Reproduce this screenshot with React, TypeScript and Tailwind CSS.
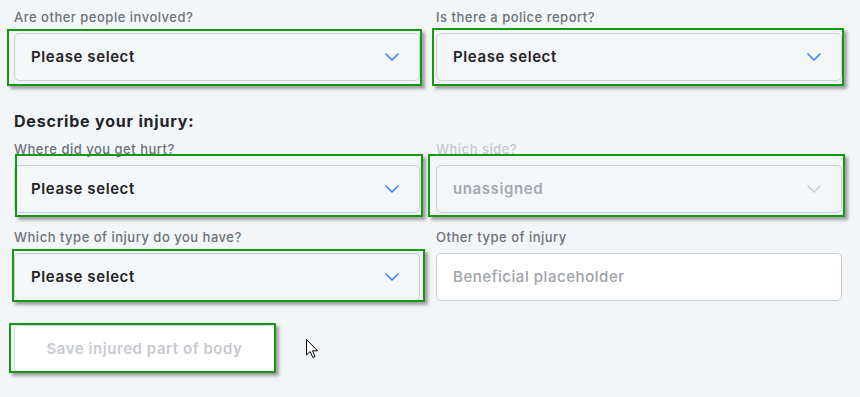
import React from "react";

const font = { fontFamily: "Inter, 'Noto Sans', sans-serif" };

function Chevron({ disabled }: { disabled?: boolean }) {
  return (
    <svg width="14" height="8" viewBox="0 0 14 8" fill="none">
      <path
        d="M1 1l6 6 6-6"
        stroke={disabled ? "#c9ccd1" : "#3b82f6"}
        strokeWidth="1.6"
        strokeLinecap="round"
        strokeLinejoin="round"
      />
    </svg>
  );
}

function Select({ value, disabled }: { value: string; disabled?: boolean }) {
  return (
    <div className="flex h-[48px] items-center justify-between rounded-[5px] border border-[#cbcfd5] bg-[#f4f7fa] pl-4 pr-5">
      <span
        className={
          disabled
            ? "text-[15px] font-semibold tracking-[0.6px] text-[#a4a8af]"
            : "text-[15px] font-semibold tracking-[0.6px] text-[#1f2226]"
        }
      >
        {value}
      </span>
      <Chevron disabled={disabled} />
    </div>
  );
}

function Label({ children, disabled }: { children: React.ReactNode; disabled?: boolean }) {
  return (
    <div
      className={
        disabled
          ? "mb-2 h-4 text-[13px] font-medium leading-4 tracking-[0.5px] text-[#c5c8cd]"
          : "mb-2 h-4 text-[13px] font-medium leading-4 tracking-[0.5px] text-[#6d7178]"
      }
    >
      {children}
    </div>
  );
}

function Frame({ l, t, w, h }: { l: number; t: number; w: number; h: number }) {
  return (
    <div
      className="pointer-events-none absolute border-2 border-[#139a13] shadow-[3px_3px_3px_rgba(0,0,0,0.35)]"
      style={{ left: l, top: t, width: w, height: h }}
    />
  );
}

export default function App() {
  return (
    <div className="relative h-[397px] w-[860px] overflow-hidden bg-[#f3f6f9]" style={font}>
      <div className="pl-[14px] pr-[18px] pt-[9px]">
        <div className="grid grid-cols-2 gap-x-4">
          <div>
            <Label>Are other people involved?</Label>
            <Select value="Please select" />
          </div>
          <div>
            <Label>Is there a police report?</Label>
            <Select value="Please select" />
          </div>
        </div>

        <div className="mt-[28px] h-6 text-[16px] font-bold leading-6 tracking-[0.8px] text-[#222428]">
          Describe your injury:
        </div>

        <div className="mt-[8px] grid grid-cols-2 gap-x-4">
          <div>
            <Label>Where did you get hurt?</Label>
            <Select value="Please select" />
          </div>
          <div>
            <Label disabled>Which side?</Label>
            <Select value="unassigned" disabled />
          </div>
        </div>

        <div className="mt-[16px] grid grid-cols-2 gap-x-4">
          <div>
            <Label>Which type of injury do you have?</Label>
            <Select value="Please select" />
          </div>
          <div>
            <Label>Other type of injury</Label>
            <div className="flex h-[48px] items-center rounded-[5px] border border-[#cbcfd5] bg-white pl-4">
              <span className="text-[15px] font-medium tracking-[0.55px] text-[#9ea2a9]">
                Beneficial placeholder
              </span>
            </div>
          </div>
        </div>

        <div className="mt-[24px]">
          <button className="flex h-[48px] w-[261px] items-center justify-center rounded-[5px] border border-[#d5d8dc] bg-white text-[15px] font-semibold tracking-[0.55px] text-[#c6c9ce]">
            Save injured part of body
          </button>
        </div>
      </div>

      <Frame l={7} t={29} w={415} h={57} />
      <Frame l={432} t={28} w={412} h={58} />
      <Frame l={15} t={154} w={408} h={63} />
      <Frame l={428} t={154} w={417} h={63} />
      <Frame l={12} t={249} w={413} h={53} />
      <Frame l={9} t={323} w={267} h={50} />

      <svg
        className="pointer-events-none absolute"
        style={{ left: 306, top: 339 }}
        width="13"
        height="20"
        viewBox="0 0 13 20"
      >
        <path
          d="M0.5 0.5 L0.5 16 L4.2 12.5 L6.8 18.5 L9 17.5 L6.5 11.8 L11.5 11.8 Z"
          fill="white"
          stroke="black"
          strokeWidth="1"
          strokeLinejoin="round"
        />
      </svg>
    </div>
  );
}
